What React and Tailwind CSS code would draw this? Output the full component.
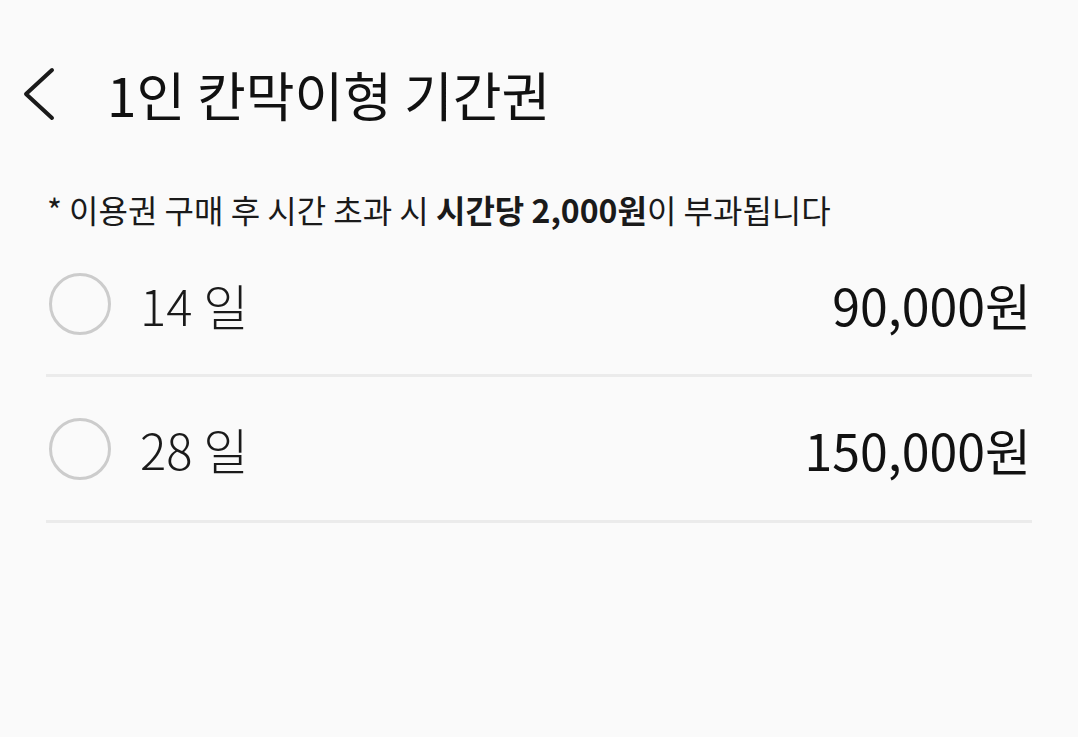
import React, { useState } from "react";

const options = [
  { id: 14, days: "14 일", price: "90,000원", h: "h-[140px]" },
  { id: 28, days: "28 일", price: "150,000원", h: "h-[143px]" },
];

function BackIcon() {
  return (
    <svg width="40" height="56" viewBox="0 0 40 56" fill="none">
      <path
        d="M34 4 L8 28 L34 52"
        stroke="#1a1a1a"
        strokeWidth="4"
        strokeLinecap="round"
        strokeLinejoin="round"
      />
    </svg>
  );
}

export default function App() {
  const [selected, setSelected] = useState(null);

  return (
    <div
      className="w-[1078px] h-[737px] bg-[#fafafa] text-[#111]"
      style={{ fontFamily: '"Noto Sans CJK KR", "Noto Sans", sans-serif' }}
    >
      {/* Header */}
      <div className="flex items-center h-[188px]">
        <button className="ml-[18px] w-[40px] flex items-center">
          <BackIcon />
        </button>
        <h1 className="ml-[49px] text-[53px] font-normal leading-none">
          1인 칸막이형 기간권
        </h1>
      </div>

      {/* Notice */}
      <p className="h-[46px] pl-[47px] text-[32px] leading-[42px] text-[#1a1a1a]">
        * 이용권 구매 후 시간 초과 시 <span className="font-bold">시간당 2,000원</span>이 부과됩니다
      </p>

      {/* Options */}
      <div className="mx-[46px]">
        {options.map((o) => (
          <div key={o.id}>
            <button
              onClick={() => setSelected(o.id)}
              className={`w-full flex items-center ${o.h}`}
            >
              <span className="ml-[3px] w-[62px] h-[62px] rounded-full border-[3px] border-[#cccccc] flex items-center justify-center">
                {selected === o.id && (
                  <span className="w-[30px] h-[30px] rounded-full bg-[#1a1a1a]" />
                )}
              </span>
              <span className="ml-[29px] text-[49px] font-light leading-none text-[#1a1a1a]">
                {o.days}
              </span>
              <span className="ml-auto mr-[1px] text-[50px] font-normal leading-none text-[#111]">
                {o.price}
              </span>
            </button>
            <div className="h-[3px] bg-[#ebebeb]" />
          </div>
        ))}
      </div>
    </div>
  );
}
